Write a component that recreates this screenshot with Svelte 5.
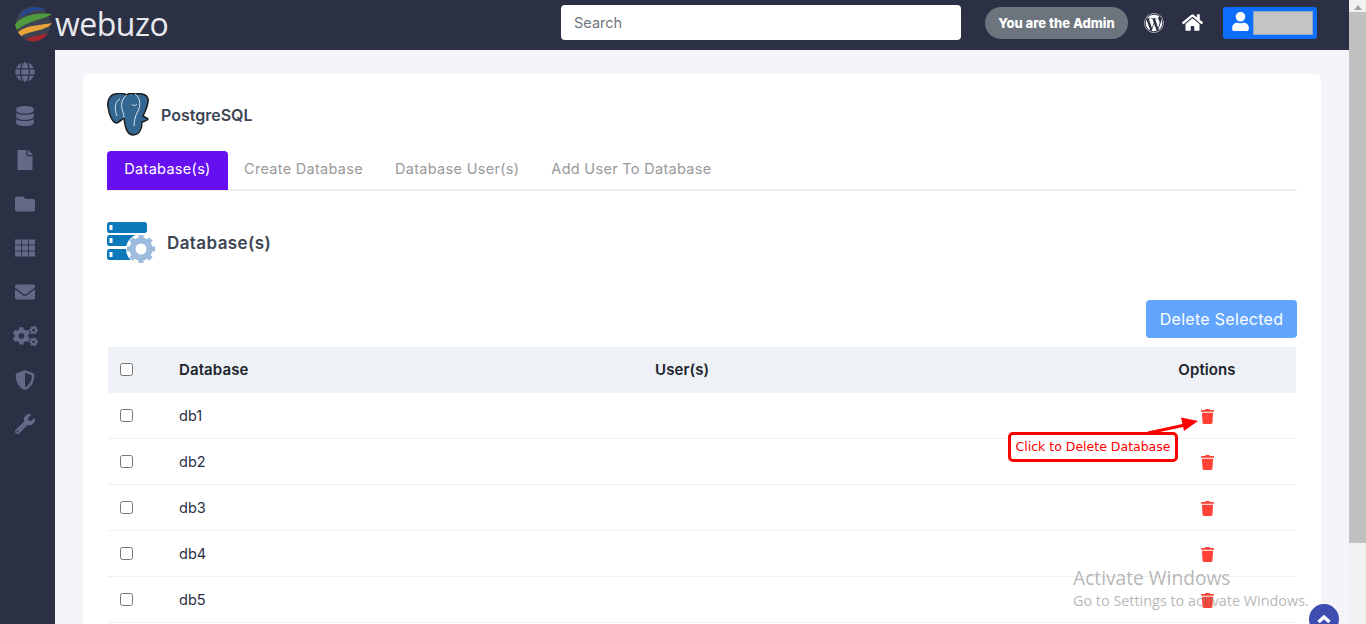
<script>
	const dbs = ["db1", "db2", "db3", "db4", "db5"];
	const side = [
		{ vb: "0 0 496 512", d: "M336.5 160C322 70.7 287.8 8 248 8s-74 62.7-88.5 152h177zM152 256c0 22.2 1.2 43.5 3.3 64h185.3c2.1-20.5 3.3-41.8 3.3-64s-1.2-43.5-3.3-64H155.3c-2.1 20.5-3.3 41.8-3.3 64zm324.7-96c-28.6-67.9-86.5-120.4-158-141.6 24.4 33.8 41.2 84.7 50 141.6h108zM177.2 18.4C105.8 39.6 47.8 92.1 19.3 160h108c8.7-56.9 25.5-107.8 49.9-141.6zM487.4 192H372.7c2.1 21 3.3 42.5 3.3 64s-1.2 43-3.3 64h114.6c5.5-20.5 8.6-41.8 8.6-64s-3.1-43.5-8.5-64zM120 256c0-21.5 1.2-43 3.3-64H8.6C3.2 212.5 0 233.8 0 256s3.2 43.5 8.6 64h114.6c-2-21-3.2-42.5-3.2-64zm39.5 96c14.5 89.3 48.7 152 88.5 152s74-62.7 88.5-152h-177zm159.3 141.6c71.4-21.2 129.4-73.7 158-141.6h-108c-8.8 56.9-25.6 107.8-50 141.6zM19.3 352c28.6 67.9 86.5 120.4 158 141.6-24.4-33.8-41.2-84.7-50-141.6h-108z" },
		{ vb: "0 0 448 512", d: "M448 73.143v45.714C448 159.143 347.667 192 224 192S0 159.143 0 118.857V73.143C0 32.857 100.333 0 224 0s224 32.857 224 73.143zM448 176v102.857C448 319.143 347.667 352 224 352S0 319.143 0 278.857V176c48.125 33.143 136.208 48.572 224 48.572S399.874 209.143 448 176zm0 160v102.857C448 479.143 347.667 512 224 512S0 479.143 0 438.857V336c48.125 33.143 136.208 48.572 224 48.572S399.874 369.143 448 336z" },
		{ vb: "0 0 384 512", d: "M224 136V0H24C10.7 0 0 10.7 0 24v464c0 13.3 10.7 24 24 24h336c13.3 0 24-10.7 24-24V160H248c-13.2 0-24-10.8-24-24zm160-14.1v6.1H256V0h6.1c6.4 0 12.5 2.5 17 7l97.9 98c4.5 4.5 7 10.6 7 16.9z" },
		{ vb: "0 0 512 512", d: "M464 128H272l-64-64H48C21.49 64 0 85.49 0 112v288c0 26.51 21.49 48 48 48h416c26.51 0 48-21.49 48-48V176c0-26.51-21.49-48-48-48z" },
		{ vb: "0 0 512 512", d: "M0 40h156v124H0zM178 40h156v124H178zM356 40h156v124H356zM0 194h156v124H0zM178 194h156v124H178zM356 194h156v124H356zM0 348h156v124H0zM178 348h156v124H178zM356 348h156v124H356z" },
		{ vb: "0 0 512 512", d: "M502.3 190.8c3.9-3.1 9.7-.2 9.7 4.7V400c0 26.5-21.5 48-48 48H48c-26.5 0-48-21.5-48-48V195.6c0-5 5.7-7.8 9.7-4.7 22.4 17.4 52.1 39.5 154.1 113.6 21.1 15.4 56.7 47.8 92.2 47.6 35.7.3 72-32.8 92.3-47.6 102-74.1 131.6-96.3 154-113.7zM256 320c23.2.4 56.6-29.2 73.4-41.4 132.7-96.3 142.8-104.7 173.4-128.7 5.8-4.5 9.2-11.5 9.2-18.9v-19c0-26.5-21.5-48-48-48H48C21.5 64 0 85.5 0 112v19c0 7.4 3.4 14.3 9.2 18.9 30.6 23.9 40.7 32.4 173.4 128.7 16.8 12.2 50.2 41.8 73.4 41.4z" },
		{ vb: "0 0 640 512", wide: true, d: "M512.1 191l-8.2 14.3c-3 5.3-9.4 7.5-15.1 5.4-11.8-4.4-22.6-10.7-32.1-18.6-4.6-3.8-5.8-10.5-2.8-15.7l8.2-14.3c-6.9-8-12.3-17.3-15.9-27.4h-16.5c-6 0-11.2-4.3-12.2-10.3-2-12-2.1-24.6 0-37.1 1-6 6.2-10.4 12.2-10.4h16.5c3.6-10.1 9-19.4 15.9-27.4l-8.2-14.3c-3-5.2-1.9-11.9 2.8-15.7 9.5-7.9 20.4-14.2 32.1-18.6 5.7-2.1 12.1.1 15.1 5.4l8.2 14.3c10.5-1.9 21.2-1.9 31.7 0L552 6.3c3-5.3 9.4-7.5 15.1-5.4 11.8 4.4 22.6 10.7 32.1 18.6 4.6 3.8 5.8 10.5 2.8 15.7l-8.2 14.3c6.9 8 12.3 17.3 15.9 27.4h16.5c6 0 11.2 4.3 12.2 10.3 2 12 2.1 24.6 0 37.1-1 6-6.2 10.4-12.2 10.4h-16.5c-3.6 10.1-9 19.4-15.9 27.4l8.2 14.3c3 5.2 1.9 11.9-2.8 15.7-9.5 7.9-20.4 14.2-32.1 18.6-5.7 2.1-12.1-.1-15.1-5.4l-8.2-14.3c-10.4 1.9-21.2 1.9-31.7 0zm-10.5-58.8c38.5 29.6 82.4-14.3 52.8-52.8-38.5-29.7-82.4 14.3-52.8 52.8zM386.3 286.1l33.7 16.8c10.1 5.8 14.5 18.1 10.5 29.1-8.9 24.2-26.4 46.4-42.6 65.8-7.4 8.9-20.2 11.1-30.3 5.3l-29.1-16.8c-16 13.7-34.6 24.6-54.9 31.7v33.6c0 11.6-8.3 21.6-19.7 23.6-24.6 4.2-50.4 4.4-75.9 0-11.5-2-20-11.9-20-23.6V418c-20.3-7.2-38.9-18-54.9-31.7L74 403c-10 5.8-22.9 3.6-30.3-5.3-16.2-19.4-33.3-41.6-42.2-65.7-4-10.9.4-23.2 10.5-29.1l33.3-16.8c-3.9-20.9-3.9-42.4 0-63.4L12 205.8c-10.1-5.8-14.6-18.1-10.5-29 8.9-24.2 26-46.4 42.2-65.8 7.4-8.9 20.2-11.1 30.3-5.3l29.1 16.8c16-13.7 34.6-24.6 54.9-31.7V57.1c0-11.5 8.2-21.5 19.6-23.5 24.6-4.2 50.5-4.4 76-.1 11.5 2 20 11.9 20 23.6v33.6c20.3 7.2 38.9 18 54.9 31.7l29.1-16.8c10-5.8 22.9-3.6 30.3 5.3 16.2 19.4 33.2 41.6 42.1 65.8 4 10.9.1 23.2-10 29.1l-33.7 16.8c3.9 21 3.9 42.5 0 63.5zm-117.6 21.1c59.2-77-28.7-164.9-105.7-105.7-59.2 77 28.7 164.9 105.7 105.7zm243.4 182.7l-8.2 14.3c-3 5.3-9.4 7.5-15.1 5.4-11.8-4.4-22.6-10.7-32.1-18.6-4.6-3.8-5.8-10.5-2.8-15.7l8.2-14.3c-6.9-8-12.3-17.3-15.9-27.4h-16.5c-6 0-11.2-4.3-12.2-10.3-2-12-2.1-24.6 0-37.1 1-6 6.2-10.4 12.2-10.4h16.5c3.6-10.1 9-19.4 15.9-27.4l-8.2-14.3c-3-5.2-1.9-11.9 2.8-15.7 9.5-7.9 20.4-14.2 32.1-18.6 5.7-2.1 12.1.1 15.1 5.4l8.2 14.3c10.5-1.9 21.2-1.9 31.7 0l8.2-14.3c3-5.3 9.4-7.5 15.1-5.4 11.8 4.4 22.6 10.7 32.1 18.6 4.6 3.8 5.8 10.5 2.8 15.7l-8.2 14.3c6.9 8 12.3 17.3 15.9 27.4h16.5c6 0 11.2 4.3 12.2 10.3 2 12 2.1 24.6 0 37.1-1 6-6.2 10.4-12.2 10.4h-16.5c-3.6 10.1-9 19.4-15.9 27.4l8.2 14.3c3 5.2 1.9 11.9-2.8 15.7-9.5 7.9-20.4 14.2-32.1 18.6-5.7 2.1-12.1-.1-15.1-5.4l-8.2-14.3c-10.4 1.9-21.2 1.9-31.7 0zM501.6 431c38.5 29.6 82.4-14.3 52.8-52.8-38.5-29.6-82.4 14.3-52.8 52.8z" },
		{ vb: "0 0 512 512", d: "M466.5 83.7l-192-80a48.15 48.15 0 0 0-36.9 0l-192 80C27.7 91.1 16 108.6 16 128c0 198.5 114.5 335.7 221.5 380.3 11.8 4.9 25.1 4.9 36.9 0C360.1 472.6 496 349.3 496 128c0-19.4-11.7-36.9-29.5-44.3zM256.1 446.3l-.1-381 175.9 73.3c-3.3 151.4-82.1 261.1-175.8 307.7z" },
		{ vb: "0 0 512 512", d: "M507.73 109.1c-2.24-9.03-13.54-12.09-20.12-5.51l-74.36 74.36-67.88-11.31-11.31-67.88 74.36-74.36c6.62-6.62 3.43-17.9-5.66-20.16-47.38-11.74-99.55.91-136.58 37.93-39.64 39.64-50.55 97.1-34.05 147.2L18.74 402.76c-24.99 24.99-24.99 65.51 0 90.5 24.99 24.99 65.51 24.99 90.5 0l213.21-213.21c50.12 16.71 107.47 5.68 147.37-34.22 37.07-37.07 49.7-89.32 37.91-136.73zM64 472c-13.25 0-24-10.75-24-24 0-13.26 10.75-24 24-24s24 10.74 24 24c0 13.25-10.75 24-24 24z" }
	];
	const trash = "M432 32H312l-9.4-18.7A24 24 0 0 0 281.1 0H166.8a23.72 23.72 0 0 0-21.4 13.3L136 32H16A16 16 0 0 0 0 48v32a16 16 0 0 0 16 16h416a16 16 0 0 0 16-16V48a16 16 0 0 0-16-16zM53.2 467a48 48 0 0 0 47.9 45h245.8a48 48 0 0 0 47.9-45L416 128H32z";
	const teeth = [0, 45, 90, 135, 180, 225, 270, 315];
</script>

<div class="page">
	<div class="app">
		<header>
			<div class="logo">
				<svg width="38" height="38" viewBox="0 0 38 38">
					<circle cx="19" cy="19" r="17.5" fill="#3c4250" />
					<path d="M7 9 C12 2 24 0 32 5 C24 4 14 6 6 13 Z" fill="#24479a" />
					<path d="M1 20 C6 11 22 7 38 9 C30 15 14 15 3 25 Z" fill="#4f9a3c" />
					<path d="M4 27 C12 20 28 20 38 18 C33 26 18 25 7 31 Z" fill="#e8a33a" />
					<path d="M12 34 C18 31 28 30 34 28 C29 36 18 39 12 34 Z" fill="#a3262c" />
				</svg>
				<span class="brand">webuzo</span>
			</div>
			<div class="search">Search</div>
			<div class="pill">You are the Admin</div>
			<svg class="wp" width="20" height="20" viewBox="0 0 512 512"><circle cx="256" cy="256" r="240" fill="#2b3044" /><path fill="#fff" d="M61.7 169.4l101.5 278C92.2 413 43.3 340.2 43.3 256c0-30.9 6.6-60.1 18.4-86.6zm337.9 75.9c0-26.3-9.4-44.5-17.5-58.7-10.8-17.5-20.9-32.4-20.9-49.9 0-19.6 14.8-37.8 35.7-37.8.9 0 1.8.1 2.8.2-37.9-34.7-88.3-55.9-143.7-55.9-74.3 0-139.7 38.1-177.8 95.9 5 .2 9.7.3 13.7.3 22.2 0 56.7-2.7 56.7-2.7 11.5-.7 12.8 16.2 1.4 17.5 0 0-11.5 1.4-24.4 2l77.5 230.4L249.8 247l-33.1-90.8c-11.5-.7-22.3-2-22.3-2-11.5-.7-10.1-18.2 1.3-17.5 0 0 35.1 2.7 56 2.7 22.2 0 56.7-2.7 56.7-2.7 11.5-.7 12.8 16.2 1.4 17.5 0 0-11.5 1.3-24.3 2l76.9 228.7 21.2-70.9c9-29.4 16-50.5 16-68.7zm-139.9 29.4l-63.8 185.5c19.1 5.6 39.2 8.7 60.1 8.7 24.8 0 48.5-4.3 70.6-12.1-.6-.9-1.1-1.9-1.5-2.9l-65.4-179.2zm183-120.7c.9 6.8 1.4 14 1.4 21.9 0 21.6-4 45.8-16.2 76.2l-65 187.9C426.2 403 468.7 334.5 468.7 256c0-37-9.4-71.8-26-102.1zM504 256c0 136.8-111.3 248-248 248C119.2 504 8 392.7 8 256 8 119.2 119.2 8 256 8c136.7 0 248 111.2 248 248zm-11.4 0c0-130.5-106.2-236.6-236.6-236.6C125.5 19.4 19.4 125.5 19.4 256S125.6 492.6 256 492.6c130.5 0 236.6-106.1 236.6-236.6z" /></svg>
			<svg class="home" width="21" height="19" viewBox="0 0 576 512"><path fill="#fff" d="M280.37 148.26L96 300.11V464a16 16 0 0 0 16 16l112.06-.29a16 16 0 0 0 15.92-16V368a16 16 0 0 1 16-16h64a16 16 0 0 1 16 16v95.64a16 16 0 0 0 16 16.05L464 480a16 16 0 0 0 16-16V300L295.67 148.26a12.19 12.19 0 0 0-15.3 0zM571.6 251.47L488 182.56V44.05a12 12 0 0 0-12-12h-56a12 12 0 0 0-12 12v72.61L318.47 43a48 48 0 0 0-61 0L4.34 251.47a12 12 0 0 0-1.6 16.9l25.5 31A12 12 0 0 0 45.15 301l235.22-193.74a12.19 12.19 0 0 1 15.3 0L530.9 301a12 12 0 0 0 16.9-1.6l25.5-31a12 12 0 0 0-1.7-16.93z" /></svg>
			<div class="userbtn">
				<svg width="17" height="19" viewBox="0 0 448 512"><path fill="#fff" d="M224 256c70.7 0 128-57.3 128-128S294.7 0 224 0 96 57.3 96 128s57.3 128 128 128zm89.6 32h-16.7c-22.2 10.2-46.9 16-72.9 16s-50.6-5.8-72.9-16h-16.7C60.2 288 0 348.2 0 422.4V464c0 26.5 21.5 48 48 48h352c26.5 0 48-21.5 48-48v-41.6c0-74.2-60.2-134.4-134.4-134.4z" /></svg>
				<span class="redact"></span>
			</div>
		</header>

		<div class="body">
			<nav>
				{#each side as s}
					<svg class:wide={s.wide} viewBox={s.vb}><path fill="#626a88" d={s.d} /></svg>
				{/each}
			</nav>

			<main>
				<section class="card">
					<div class="title">
						<svg width="42" height="43" viewBox="0 0 42 43">
							<path d="M8 1 C3 2 0 7 1 14 C2 21 5 29 9 30 C12 30 14 27 17 25 C18 33 19 41 26 42 C33 42 35 35 35 29 C37 28 40 28 41 26 L36 23 C39 17 42 11 41 6 C40 1 33 0 28 1 C25 0 22 0 20 2 C16 0 12 0 8 1 Z" fill="#336791" stroke="#1c1c1c" stroke-width="1.5" stroke-linejoin="round" />
							<path d="M20 2 C15 5 13 12 16 19 C17 23 17 24 17 25 M28 1 C35 6 33 15 30 20 C28 24 27 28 27 33 M13 6 C8 8 7 16 10 23 M30 11 C28 13 26 13 25 11" fill="none" stroke="#fff" stroke-width="0.8" />
						</svg>
						<h2>PostgreSQL</h2>
					</div>

					<div class="tabs">
						<span class="tab active">Database(s)</span>
						<span class="tab">Create Database</span>
						<span class="tab">Database User(s)</span>
						<span class="tab">Add User To Database</span>
					</div>

					<div class="subtitle">
						<svg width="48" height="42" viewBox="0 0 48 42">
							<rect y="0" width="40" height="11" rx="2.5" fill="#0a78b9" />
							<rect y="13" width="40" height="11" rx="2.5" fill="#0a78b9" />
							<rect y="27" width="40" height="11" rx="2.5" fill="#0a78b9" />
							<rect x="2.5" y="3" width="3" height="5" fill="#fff" />
							<rect x="2.5" y="16" width="3" height="5" fill="#fff" />
							<rect x="2.5" y="30" width="3" height="5" fill="#fff" />
							<circle cx="34" cy="27" r="15" fill="#fff" />
							<circle cx="34" cy="27" r="8.5" fill="none" stroke="#9dbbdc" stroke-width="6" />
							{#each teeth as a}
								<rect x="31.5" y="13" width="5" height="4" fill="#9dbbdc" transform="rotate({a} 34 27)" />
							{/each}
						</svg>
						<h3>Database(s)</h3>
					</div>

					<div class="actions"><button>Delete Selected</button></div>

					<table>
						<thead>
							<tr>
								<th class="c1"><input type="checkbox" /></th>
								<th class="c2">Database</th>
								<th class="c3">User(s)</th>
								<th class="c4">Options</th>
							</tr>
						</thead>
						<tbody>
							{#each dbs as db}
								<tr>
									<td class="c1"><input type="checkbox" /></td>
									<td class="c2">{db}</td>
									<td class="c3"></td>
									<td class="c4"><svg class="trash" viewBox="0 0 448 512"><path fill="#ff4136" d={trash} /></svg></td>
								</tr>
							{/each}
						</tbody>
					</table>
				</section>
			</main>
		</div>

		<!-- annotation drawn on the screenshot -->
		<svg class="arrow" width="60" height="24" viewBox="0 0 60 24">
			<path d="M1 19 L38 11" stroke="#f00" stroke-width="3" />
			<path d="M51 7 L34 3.5 L37 17 Z" fill="#f00" />
		</svg>
		<div class="note">Click to Delete Database</div>

		<div class="watermark">
			<div class="wm1">Activate Windows</div>
			<div class="wm2">Go to Settings to activate Windows.</div>
		</div>

		<div class="totop">
			<svg width="16" height="16" viewBox="0 0 16 16"><path d="M2.5 10 L8 5 L13.5 10" fill="none" stroke="#fff" stroke-width="3.4" /></svg>
		</div>
	</div>

	<div class="scrollbar">
		<span class="up"></span>
		<span class="thumb"></span>
	</div>
</div>

<style>
	:global(body) {
		margin: 0;
		overflow: hidden;
	}

	.page {
		display: flex;
		height: 624px;
		overflow: hidden;
		font-family: Inter, "Liberation Sans", sans-serif;
		color: #3d4654;
	}

	.app {
		position: relative;
		flex: 1;
		min-width: 0;
		display: flex;
		flex-direction: column;
		overflow: hidden;
	}

	header {
		flex: none;
		height: 50px;
		background: #2b3044;
		display: flex;
		align-items: center;
	}

	.logo {
		display: flex;
		align-items: center;
		width: 561px;
		padding-left: 14px;
		box-sizing: border-box;
		margin-top: -3px;
	}

	.brand {
		font-family: "Open Sans", sans-serif;
		font-size: 32px;
		color: #e9eaee;
		margin-left: 3px;
		letter-spacing: -0.5px;
	}

	.search {
		width: 400px;
		height: 35px;
		box-sizing: border-box;
		background: #fff;
		border-radius: 4px;
		padding: 0 13px;
		line-height: 35px;
		font-size: 14.5px;
		color: #6f7680;
		margin-top: -5px;
	}

	.pill {
		margin: -4px 0 0 24px;
		width: 143px;
		height: 32px;
		line-height: 32px;
		text-align: center;
		background: #6c757d;
		border-radius: 16px;
		color: #fff;
		font-weight: 800;
		font-size: 13px;
	}

	.wp {
		margin: -4px 0 0 16px;
	}

	.home {
		margin: -5px 0 0 18px;
	}

	.userbtn {
		margin: -4px 0 0 20px;
		width: 94px;
		height: 32px;
		box-sizing: border-box;
		background: #0d6efd;
		border-radius: 3px;
		display: flex;
		align-items: center;
		padding-left: 9px;
		gap: 4px;
	}

	.userbtn svg {
		margin-top: -3px;
	}

	.redact {
		width: 60px;
		height: 24px;
		box-sizing: border-box;
		background: #c4c4c4;
		border: 1px solid #8fa8d0;
	}

	.body {
		flex: 1;
		display: flex;
		min-height: 0;
	}

	nav {
		flex: none;
		width: 55px;
		background: #2b3044;
		display: flex;
		flex-direction: column;
		align-items: center;
		gap: 24px;
		padding: 12px 5px 0 0;
		box-sizing: border-box;
	}

	nav svg {
		width: 20px;
		height: 20px;
		flex: none;
	}

	nav svg.wide {
		width: 25px;
	}

	main {
		flex: 1;
		min-width: 0;
		background: #f5f5f9;
		padding: 24px 28px 0;
	}

	.card {
		background: #fff;
		border-radius: 6px;
		padding: 19px 24px 40px;
		width: 1238px;
		box-sizing: border-box;
	}

	.title {
		display: flex;
		align-items: center;
		gap: 12px;
		height: 43px;
	}

	h2 {
		margin: 0;
		padding-top: 1px;
		font-size: 16px;
		font-weight: 600;
		color: #3d4654;
	}

	.tabs {
		display: flex;
		margin-top: 15px;
		height: 40px;
		border-bottom: 2px solid #eeeeee;
		box-sizing: border-box;
	}

	.tab {
		padding: 0 16px;
		line-height: 36px;
		font-size: 14.5px;
		letter-spacing: 0.3px;
		color: #9a9a9a;
	}

	.tab.active {
		background: #6610f2;
		color: #fff;
		border-radius: 4px 4px 0 0;
		height: 39px;
		width: 121px;
		box-sizing: border-box;
		text-align: center;
		padding: 0;
	}

	.subtitle {
		display: flex;
		align-items: center;
		gap: 12px;
		margin-top: 31px;
		height: 42px;
	}

	h3 {
		margin: 0;
		font-size: 17px;
		font-weight: 600;
		letter-spacing: 0.4px;
		color: #3d4654;
	}

	.actions {
		display: flex;
		justify-content: flex-end;
		margin-top: 36px;
	}

	button {
		width: 151px;
		height: 38px;
		border: 0;
		border-radius: 4px;
		background: #61a5ff;
		color: #fff;
		font: inherit;
		font-size: 16px;
		letter-spacing: 0.3px;
	}

	table {
		width: 1188px;
		margin: 9px 0 0 1px;
		border-collapse: collapse;
		table-layout: fixed;
		font-size: 14.5px;
	}

	th {
		height: 44px;
		padding: 0 0 2px;
		background: #eef1f6;
		font-weight: 600;
		font-size: 15px;
		letter-spacing: 0.1px;
		color: #20242c;
		text-align: left;
	}

	td {
		height: 45px;
		padding: 0;
		border-bottom: 1px solid #eef0f5;
		color: #2a2f45;
	}

	.c1 {
		width: 71px;
		text-align: left;
	}

	.c2 {
		width: 476px;
	}

	.c4 {
		width: 178px;
		text-align: center;
	}

	input {
		display: block;
		width: 13px;
		height: 13px;
		margin: 0 0 0 12px;
	}

	.trash {
		display: block;
		width: 13px;
		height: 15px;
		margin: 1px auto 0;
	}

	.arrow {
		position: absolute;
		left: 1147px;
		top: 414px;
	}

	.note {
		position: absolute;
		left: 1008px;
		top: 432px;
		width: 170px;
		height: 30px;
		box-sizing: border-box;
		background: #fff;
		border: 3px solid #f00;
		border-radius: 5px;
		color: #f00;
		font-family: "DejaVu Sans", sans-serif;
		font-size: 12.5px;
		line-height: 24px;
		text-align: center;
		white-space: nowrap;
	}

	.watermark {
		position: absolute;
		left: 1073px;
		top: 564px;
		color: rgba(120, 120, 120, 0.55);
		font-family: "Open Sans", sans-serif;
		white-space: nowrap;
	}

	.wm1 {
		font-size: 19.2px;
		line-height: 27px;
	}

	.wm2 {
		font-size: 14.4px;
		line-height: 19px;
	}

	.totop {
		position: absolute;
		left: 1309px;
		top: 604px;
		width: 30px;
		height: 30px;
		border-radius: 50%;
		background: #3d4db0;
		display: flex;
		justify-content: center;
		padding-top: 8px;
		box-sizing: border-box;
	}

	.scrollbar {
		flex: none;
		width: 17px;
		background: #f1f1f1;
		display: flex;
		flex-direction: column;
		align-items: center;
	}

	.up {
		flex: none;
		width: 0;
		height: 0;
		border: 4px solid transparent;
		margin-top: 1px;
		border-bottom: 5px solid #a3a3a3;
	}

	.thumb {
		flex: none;
		width: 100%;
		height: 531px;
		margin-top: 2px;
		background: #c1c1c1;
	}
</style>
